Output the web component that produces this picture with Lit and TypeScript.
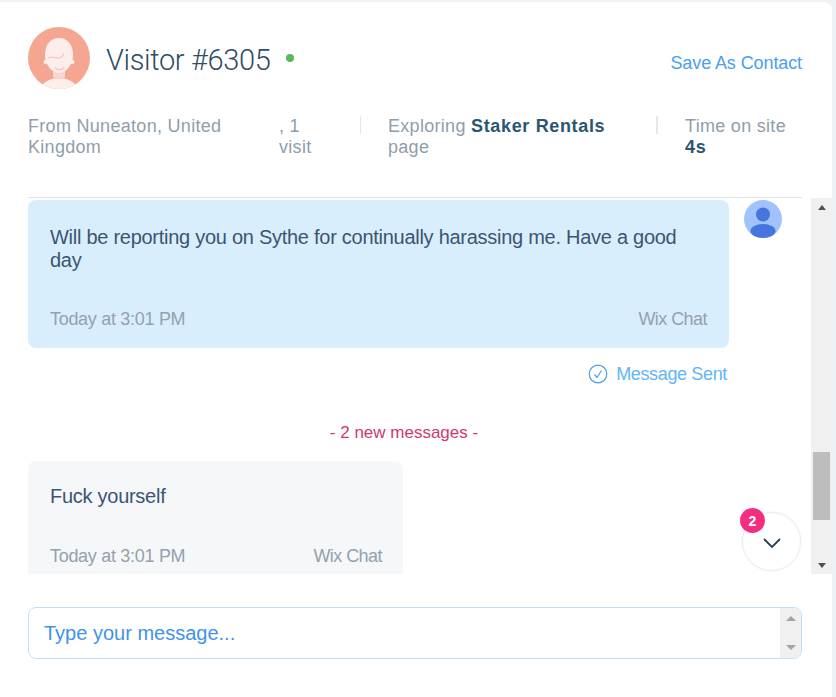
import { LitElement, html, css } from "lit";
import { customElement } from "lit/decorators.js";

@customElement("app-root")
export class AppRoot extends LitElement {
  static styles = css`
    :host { display: block; width: 836px; height: 697px; background: #edf2f6; font-family: "Liberation Sans", Arial, sans-serif; overflow: hidden; }
    * { box-sizing: border-box; }
    .card { width: 832px; height: 695px; margin-top: 2px; background: #fff; border-radius: 0 8px 0 0; display: flex; flex-direction: column; }
    .head { height: 196px; margin: 0 30px 0 28px; border-bottom: 1px solid #dfe5eb; flex: none; padding-top: 25px; }
    .title { display: flex; align-items: center; height: 62px; }
    .avatar { width: 62px; height: 62px; display: block; flex: none; }
    .name { font-family: Roboto, "Liberation Sans", sans-serif; font-size: 29px; font-weight: 300; color: #2f4d66; margin: 3px 0 0 16px; letter-spacing: -0.35px; }
    .dot { width: 8px; height: 8px; border-radius: 50%; background: #5cb85c; margin: 0 0 0 16px; }
    .save { margin-left: auto; font-size: 18px; color: #4aa0f0; margin-top: 11px; letter-spacing: -0.1px; }
    .info { display: flex; margin-top: 27px; font-size: 18px; line-height: 21px; color: #8f9eac; letter-spacing: .3px; }
    .from { width: 251px; }
    .visit { width: 81px; padding-right: 30px; }
    .vsep { width: 1px; height: 18px; background: #e3e8ee; flex: none; margin-right: 27px; }
    .explore { width: 268px; padding-right: 40px; }
    .sep { width: 2px; height: 18px; background: #e9e6ee; flex: none; }
    .time { margin-left: 27px; flex: 1; white-space: nowrap; }
    b { color: #2b5672; font-weight: 700; letter-spacing: .65px; }
    .body { height: 376px; flex: none; display: flex; position: relative; }
    .msgs { flex: 1; overflow: hidden; padding: 2px 0 0 28px; }
    .row { display: flex; align-items: flex-start; }
    .bubble { border-radius: 8px; padding: 26px 22px 0 22px; color: #3a5670; font-size: 20px; line-height: 23px; letter-spacing: -.27px; }
    .mine { width: 701px; height: 148px; background: #d9eefc; }
    .theirs { width: 375px; height: 130px; background: #f6f7f9; margin-top: 18px; padding: 24px 21px 0 22px; }
    .mini { width: 38px; height: 38px; margin-left: 15px; flex: none; display: block; }
    .meta { display: flex; justify-content: space-between; font-size: 18px; line-height: 22px; color: #94a1ae; letter-spacing: -.3px; }
    .meta span:last-child { letter-spacing: -.55px; }
    .mine .meta { margin-top: 36px; }
    .theirs .meta { margin-top: 37px; }
    .sent { width: 701px; display: flex; justify-content: flex-end; align-items: center; margin-top: 14px; height: 24px; color: #62b5f8; font-size: 18px; letter-spacing: -.35px; padding-right: 2px; }
    .sent svg { width: 20px; height: 20px; margin-right: 8px; }
    .new { width: 752px; text-align: center; color: #d0396c; font-size: 17px; line-height: 20px; margin-top: 37px; }
    .bar { width: 21px; flex: none; background: #f0f0f0; position: relative; display: flex; flex-direction: column; justify-content: space-between; align-items: center; padding: 7px 0 6px; }
    .up, .down { width: 0; height: 0; border-left: 4px solid transparent; border-right: 4px solid transparent; }
    .up { border-bottom: 5px solid #505050; }
    .down { border-top: 5px solid #505050; }
    .thumb { position: absolute; left: 2px; top: 254px; width: 17px; height: 68px; background: #bdbdbd; }
    .fab { position: absolute; right: 31px; top: 314px; width: 59px; height: 59px; border-radius: 50%; background: #fff; border: 1px solid #eceef0; box-shadow: 0 0 2px rgba(0,0,0,.08); display: flex; align-items: center; justify-content: center; }
    .fab svg { width: 20px; height: 12px; margin-top: 2px; }
    .badge { position: absolute; left: -3px; top: -5px; width: 25px; height: 25px; border-radius: 50%; background: #f52d80; color: #fff; font-size: 14px; font-weight: 700; display: flex; align-items: center; justify-content: center; }
    .input { margin: 33px 30px 0 28px; height: 52px; border: 1px solid #c0e0f8; border-radius: 8px; display: flex; overflow: hidden; }
    .ph { flex: 1; color: #3f93ea; font-size: 20px; padding: 15px 0 0 15px; line-height: 20px; }
    .ibar { width: 21px; background: #f0f0f0; display: flex; flex-direction: column; justify-content: space-between; align-items: center; padding: 8px 0; }
    .ibar .up { border-left-width: 5px; border-right-width: 5px; border-bottom: 5px solid #a3a3a3; }
    .ibar .down { border-left-width: 5px; border-right-width: 5px; border-top: 5px solid #a3a3a3; }
  `;

  render() {
    return html`<div class="card">
      <div class="head">
        <div class="title">
          <svg class="avatar" viewBox="0 0 62 62">
            <defs><clipPath id="c"><circle cx="31" cy="31" r="31"/></clipPath></defs>
            <g clip-path="url(#c)">
              <rect width="62" height="62" fill="#f5a691"/>
              <path d="M13 60c3-6 11-9 18-9s15 3 18 9v2H13z" fill="#fdeeec"/>
              <path d="M25 44h12v6c-2 3-10 3-12 0z" fill="#fbd4d0"/>
              <circle cx="17.5" cy="35" r="2" fill="#fdeeec"/>
              <circle cx="44.5" cy="35" r="2" fill="#fdeeec"/>
              <path d="M17 28c0-11 6-17 14-17s14 6 14 17c0 10-7 18-14 18s-14-8-14-18z" fill="#fdeeec"/>
              <path d="M20 31c4-2 7 0 10 0 3 0 5-2 6-5" fill="none" stroke="#f9cdd0" stroke-width="1.6"/>
              <path d="M27 40.5c2 3 7 3 9 0" fill="none" stroke="#f7b9aa" stroke-width="1.2"/>
            </g>
          </svg>
          <span class="name">Visitor #6305</span><span class="dot"></span>
          <span class="save">Save As Contact</span>
        </div>
        <div class="info">
          <div class="from">From Nuneaton, United Kingdom</div>
          <div class="visit">, 1 visit</div>
          <div class="vsep"></div>
          <div class="explore">Exploring <b>Staker Rentals</b> page</div>
          <div class="sep"></div>
          <div class="time">Time on site<br><b>4s</b></div>
        </div>
      </div>
      <div class="body">
        <div class="msgs">
          <div class="row">
            <div class="bubble mine">
              Will be reporting you on Sythe for continually harassing me. Have a good day
              <div class="meta"><span>Today at 3:01 PM</span><span>Wix Chat</span></div>
            </div>
            <svg class="mini" viewBox="0 0 38 38">
              <circle cx="19" cy="19" r="19" fill="#a0c2fd"/>
              <circle cx="19" cy="14.5" r="7" fill="#4675de"/>
              <ellipse cx="19" cy="31" rx="12.5" ry="7" fill="#4675de"/>
            </svg>
          </div>
          <div class="sent">
            <svg viewBox="0 0 20 20"><circle cx="10" cy="10" r="8.8" fill="none" stroke="#4a9fe8" stroke-width="1.2"/><path d="M6.5 10.5l2.5 3 4.5-7" fill="none" stroke="#4a9fe8" stroke-width="1.2"/></svg>
            Message Sent
          </div>
          <div class="new">- 2 new messages -</div>
          <div class="bubble theirs">
            Fuck yourself
            <div class="meta"><span>Today at 3:01 PM</span><span>Wix Chat</span></div>
          </div>
        </div>
        <div class="fab">
          <svg viewBox="0 0 20 12"><path d="M2 2l8 8 8-8" fill="none" stroke="#2b3f55" stroke-width="1.8"/></svg>
          <span class="badge">2</span>
        </div>
        <div class="bar"><span class="up"></span><span class="thumb"></span><span class="down"></span></div>
      </div>
      <div class="input">
        <div class="ph">Type your message...</div>
        <div class="ibar"><span class="up"></span><span class="down"></span></div>
      </div>
    </div>`;
  }
}
